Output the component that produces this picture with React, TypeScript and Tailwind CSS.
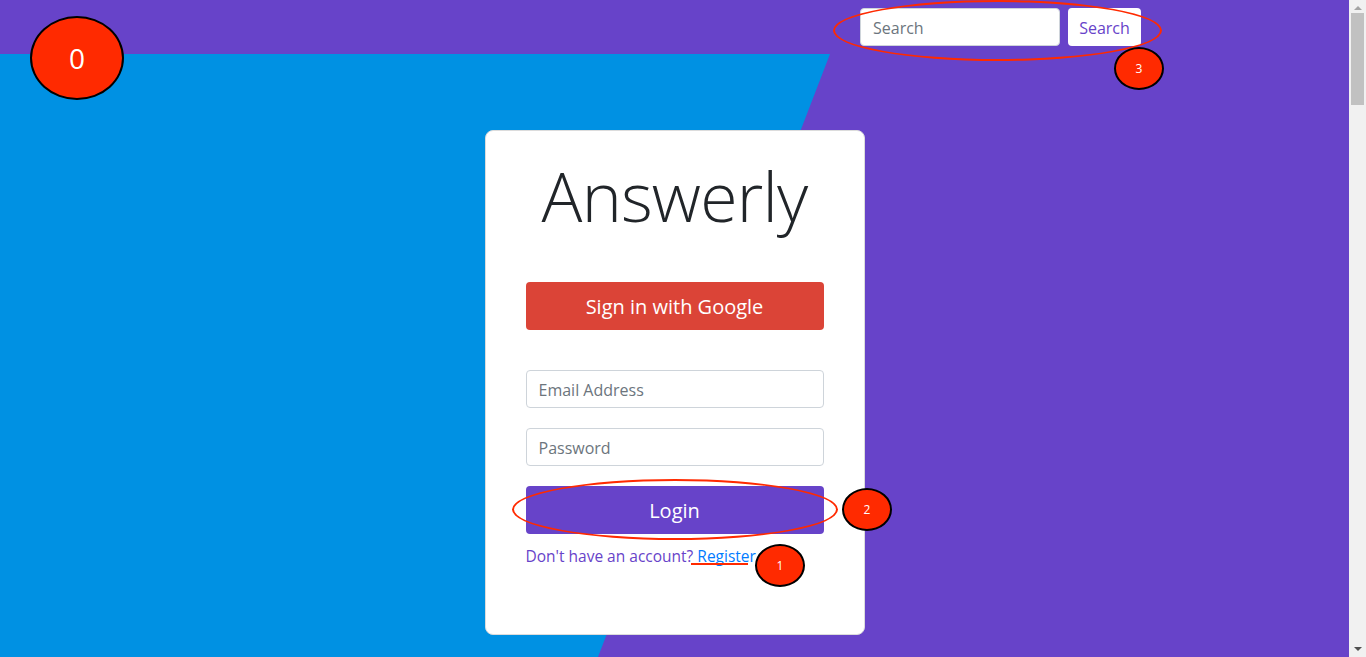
import React from "react";

const font = { fontFamily: '"Open Sans", "Noto Sans", sans-serif' };

function Marker({ label, className, text }: { label: string; className: string; text: string }) {
  return (
    <div
      className={`absolute flex items-center justify-center rounded-[50%] border-2 border-black bg-[#ff2a00] text-white ${className} ${text}`}
    >
      {label}
    </div>
  );
}

function Scrollbar() {
  return (
    <div className="flex h-full w-[17px] shrink-0 flex-col items-center bg-[#f1f1f1]">
      <div className="flex h-[13px] items-center justify-center pt-[2px]">
        <div className="h-0 w-0 border-x-[4px] border-b-[4px] border-x-transparent border-b-[#a3a3a3]" />
      </div>
      <div className="h-[92px] w-[13px] bg-[#c1c1c1]" />
      <div className="flex-1" />
      <div className="flex h-[17px] items-center justify-center">
        <div className="h-0 w-0 border-x-[4px] border-t-[4px] border-x-transparent border-t-[#505050]" />
      </div>
    </div>
  );
}

export default function App() {
  return (
    <div className="flex h-[657px] w-full overflow-hidden" style={font}>
      <div className="relative h-full flex-1 overflow-hidden bg-[#6743c9]">
        {/* blue slanted background */}
        <div className="absolute left-0 top-[54px] h-[603px] w-[830px] bg-[#0091e3] [clip-path:polygon(0_0,100%_0,598px_100%,0_100%)]" />

        <nav className="relative flex h-[54px] items-center justify-end gap-2 pr-[208px]">
          <input
            className="h-[38px] w-[200px] rounded border border-[#ced4da] bg-white px-3 pt-[2px] text-base text-[#495057] outline-none placeholder:text-[#6c757d]"
            placeholder="Search"
          />
          <button className="h-[38px] w-[73px] rounded bg-white pt-[1px] text-base text-[#6743c9]">Search</button>
        </nav>

        <main className="relative flex justify-center pt-[76px]">
          <div className="flex w-[380px] flex-col rounded-lg border border-[#dcdcdc] bg-white px-10 pb-[66px] pt-[24px]">
            <h1 className="text-center text-[68px] font-light leading-[1.2] tracking-[-0.8px] text-[#212529]">Answerly</h1>
            <button className="mt-[45px] h-[48px] rounded bg-[#db4437] pt-[2px] text-[20px] text-white">Sign in with Google</button>
            <input
              className="mt-[40px] h-[38px] rounded border border-[#ced4da] px-3 pt-[2px] text-base outline-none placeholder:text-[#6c757d]"
              placeholder="Email Address"
            />
            <input
              className="mt-5 h-[38px] rounded border border-[#ced4da] px-3 pt-[2px] text-base outline-none placeholder:text-[#6c757d]"
              placeholder="Password"
              type="password"
            />
            <button className="mt-5 h-[48px] rounded bg-[#6743c9] pt-[2px] text-[20px] text-white">Login</button>
            <p className="mt-[11px] text-[15.5px] text-[#6743c9]">
              Don't have an account? <a className="text-[#007bff]">Register</a>
            </p>
          </div>
        </main>

        {/* annotation overlays */}
        <div className="absolute left-[833px] top-0 h-[61px] w-[329px] rounded-[50%] border-2 border-[#ff2a00]" />
        <div className="absolute left-[512px] top-[479px] h-[61px] w-[326px] rounded-[50%] border-2 border-[#ff2a00]" />
        <div className="absolute left-[691px] top-[563px] h-[2px] w-[57px] bg-[#ff2a00]" />
        <Marker label="0" className="left-[30px] top-[16px] h-[84px] w-[94px]" text="text-[28px]" />
        <Marker label="3" className="left-[1114px] top-[47px] h-[43px] w-[50px]" text="text-xs" />
        <Marker label="2" className="left-[842px] top-[488px] h-[43px] w-[50px]" text="text-xs" />
        <Marker label="1" className="left-[755px] top-[544px] h-[43px] w-[50px]" text="text-xs" />
      </div>
      <Scrollbar />
    </div>
  );
}
